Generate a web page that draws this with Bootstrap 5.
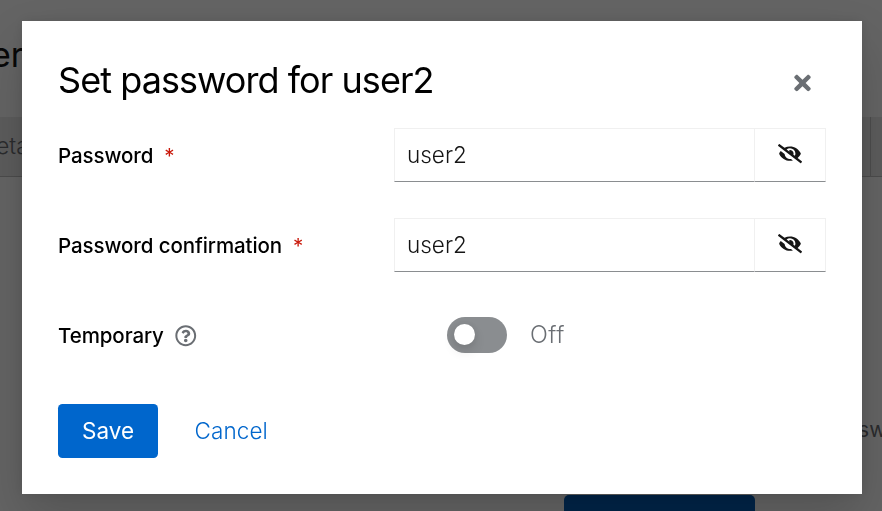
<!DOCTYPE html>
<html lang="en">
<head>
<meta charset="utf-8">
<meta name="viewport" content="width=device-width, initial-scale=1">
<title>Set password for user2</title>
<link href="https://cdn.jsdelivr.net/npm/bootstrap@5.3.0/dist/css/bootstrap.min.css" rel="stylesheet">
<style>
html, body { height: 100%; }
body { background: #646464; font-family: Inter, "Open Sans", sans-serif; font-size: 22px; font-weight: 300; color: #151515; }
.page { height: 511px; }
.page-title { height: 117px; padding-top: 31px; font-size: 34px; line-height: 48px; font-weight: 400; color: #080808; }
.page-title span { margin-left: -9px; }
.tab-strip { height: 60px; background: #5c5c5c; border-bottom: 1px solid #4c4c4c; font-size: 23px; color: #2a2b2d; }
.tab-strip .tab-name { margin-left: -4px; }
.tab-end { width: 12px; border-left: 1px solid #4c4c4c; }
.hint { padding-top: 234px; height: 318px; font-size: 21px; line-height: 38px; font-weight: 400; color: #2a2b2d; }
.hint span { margin-right: -37px; }
.under-btn { width: 191px; height: 16px; margin-left: 564px; background: #002448; border-radius: 5px 5px 0 0; }
.modal { --bs-modal-width: 840px; --bs-modal-margin: 0; }
.modal-dialog { margin: 21px 20px 0 22px; max-width: 840px; }
.modal-content { height: 473px; border: 0; border-radius: 0; padding: 36px 36px 0; box-shadow: 0 24px 48px rgba(3,3,3,.16), 0 0 12px rgba(3,3,3,.1); color: #151515; }
.head { height: 71px; }
.head h1 { font-size: 36px; line-height: 47px; font-weight: 400; letter-spacing: -.95px; color: #000; }
.close-x { margin: 14px 15.5px 0 0; color: #6a6e73; line-height: 0; }
.field { height: 54px; margin-bottom: 36px; }
.field-label { width: 336px; padding-top: 2px; font-size: 20.5px; font-weight: 500; letter-spacing: -.09px; color: #000; }
.req { color: #c9190b; margin-left: 11px; font-weight: 400; }
.field .input-group { width: 432px; height: 54px; }
.field .form-control { border: 1px solid #f0f0f0; border-bottom-color: #8a8d90; border-radius: 0; padding: 0 12px; font-size: 22.5px; font-weight: 300; color: #151515; }
.field .btn { width: 72px; border: 1px solid #f0f0f0; border-bottom-color: #8a8d90; border-radius: 0; padding: 0 0 2px; line-height: 0; color: #151515; }
.help { margin-left: 11.5px; line-height: 0; color: #6a6e73; }
.toggle { width: 60px; height: 36px; margin-left: 53px; padding-left: 7px; border-radius: 18px; background: #8a8d90; }
.knob { width: 21px; height: 21px; margin-bottom: 1px; border-radius: 50%; background: #fff; box-shadow: 0 6px 12px rgba(3,3,3,.12), 0 0 6px rgba(3,3,3,.06); }
.off { margin-left: 23px; font-size: 23.5px; letter-spacing: .5px; color: #6a6e73; }
.actions { margin-top: 6px; }
.actions .btn { height: 54px; padding: 0; font-size: 22.5px; }
.save { width: 100px; background: #06c; border: 0; border-radius: 4.5px; color: #fff; font-weight: 400; }
.cancel { margin-left: 36.5px; border: 0; color: #06c; font-weight: 300; letter-spacing: .1px; }
</style>
</head>
<body class="overflow-hidden">
<div class="page overflow-hidden">
  <div class="page-title"><span>er</span></div>
  <div class="tab-strip d-flex justify-content-between">
    <span class="tab-name align-self-center">eta</span>
    <div class="tab-end"></div>
  </div>
  <div class="hint text-end"><span>sword</span></div>
  <div class="under-btn"></div>
</div>

<div class="modal d-block overflow-hidden" tabindex="-1" role="dialog" aria-modal="true">
  <div class="modal-dialog">
    <div class="modal-content">
      <div class="head d-flex justify-content-between align-items-start">
        <h1 class="m-0">Set password for user2</h1>
        <button type="button" class="close-x btn p-0 border-0" aria-label="Close">
          <svg width="17" height="24" viewBox="0 0 352 512" fill="currentColor"><path d="M242.72 256l100.07-100.07c12.28-12.28 12.28-32.19 0-44.48l-22.24-22.24c-12.28-12.28-32.19-12.28-44.48 0L176 189.28 75.93 89.21c-12.28-12.28-32.19-12.28-44.48 0L9.21 111.45c-12.28 12.28-12.28 32.19 0 44.48L109.28 256 9.21 356.07c-12.28 12.28-12.28 32.19 0 44.48l22.24 22.24c12.28 12.28 32.2 12.28 44.48 0L176 322.72l100.07 100.07c12.28 12.28 32.2 12.28 44.48 0l22.24-22.24c12.28-12.28 12.28-32.19 0-44.48L242.72 256z"/></svg>
        </button>
      </div>

      <div class="field d-flex align-items-center">
        <label class="field-label" for="pw">Password<span class="req">*</span></label>
        <div class="input-group">
          <input id="pw" class="form-control" type="text" value="user2">
          <button type="button" class="btn" aria-label="Hide password">
            <svg width="24" height="19.2" viewBox="0 0 640 512" fill="currentColor"><path d="M320 400c-75.85 0-137.25-58.71-142.9-133.11L72.2 185.82c-13.79 17.3-26.48 35.59-36.72 55.59a32.35 32.35 0 0 0 0 29.19C89.71 376.41 197.07 448 320 448c26.91 0 52.87-4 77.89-10.46L346 397.39a144.13 144.13 0 0 1-26 2.61zm313.82 58.1l-110.55-85.44a331.25 331.25 0 0 0 81.25-102.07 32.35 32.35 0 0 0 0-29.19C550.29 135.59 442.93 64 320 64a308.15 308.15 0 0 0-147.32 37.7L45.46 3.37A16 16 0 0 0 23 6.18L3.37 31.45A16 16 0 0 0 6.18 53.9l588.36 454.73a16 16 0 0 0 22.46-2.81l19.64-25.27a16 16 0 0 0-2.82-22.45zm-183.72-142l-39.3-30.38A94.75 94.75 0 0 0 416 256a94.76 94.76 0 0 0-121.31-92.21A47.65 47.65 0 0 1 304 192a46.64 46.64 0 0 1-1.54 10l-73.61-56.89A142.31 142.31 0 0 1 320 112a143.92 143.92 0 0 1 144 144c0 21.63-5.29 41.79-13.9 60.11z"/></svg>
          </button>
        </div>
      </div>

      <div class="field d-flex align-items-center">
        <label class="field-label" for="pw2">Password confirmation<span class="req">*</span></label>
        <div class="input-group">
          <input id="pw2" class="form-control" type="text" value="user2">
          <button type="button" class="btn" aria-label="Hide password">
            <svg width="24" height="19.2" viewBox="0 0 640 512" fill="currentColor"><path d="M320 400c-75.85 0-137.25-58.71-142.9-133.11L72.2 185.82c-13.79 17.3-26.48 35.59-36.72 55.59a32.35 32.35 0 0 0 0 29.19C89.71 376.41 197.07 448 320 448c26.91 0 52.87-4 77.89-10.46L346 397.39a144.13 144.13 0 0 1-26 2.61zm313.82 58.1l-110.55-85.44a331.25 331.25 0 0 0 81.25-102.07 32.35 32.35 0 0 0 0-29.19C550.29 135.59 442.93 64 320 64a308.15 308.15 0 0 0-147.32 37.7L45.46 3.37A16 16 0 0 0 23 6.18L3.37 31.45A16 16 0 0 0 6.18 53.9l588.36 454.73a16 16 0 0 0 22.46-2.81l19.64-25.27a16 16 0 0 0-2.82-22.45zm-183.72-142l-39.3-30.38A94.75 94.75 0 0 0 416 256a94.76 94.76 0 0 0-121.31-92.21A47.65 47.65 0 0 1 304 192a46.64 46.64 0 0 1-1.54 10l-73.61-56.89A142.31 142.31 0 0 1 320 112a143.92 143.92 0 0 1 144 144c0 21.63-5.29 41.79-13.9 60.11z"/></svg>
          </button>
        </div>
      </div>

      <div class="field d-flex align-items-center">
        <div class="field-label d-flex align-items-center">
          <span>Temporary</span>
          <span class="help"><svg width="21.5" height="21.5" viewBox="0 0 512 512" fill="currentColor"><path d="M256 8C119.043 8 8 119.083 8 256c0 136.997 111.043 248 248 248s248-111.003 248-248C504 119.083 392.957 8 256 8zm0 448c-110.532 0-200-89.431-200-200 0-110.495 89.472-200 200-200 110.491 0 200 89.471 200 200 0 110.53-89.431 200-200 200zm107.244-255.2c0 67.052-72.421 68.084-72.421 92.863V300c0 6.627-5.373 12-12 12h-45.647c-6.627 0-12-5.373-12-12v-8.659c0-35.745 27.1-50.034 47.579-61.516 17.561-9.845 28.324-16.541 28.324-29.579 0-17.246-21.999-28.693-39.784-28.693-23.189 0-33.894 10.977-48.942 29.969-4.057 5.12-11.46 6.071-16.666 2.124l-27.824-21.098c-5.107-3.872-6.251-11.066-2.644-16.363C184.846 131.491 214.94 112 261.794 112c49.071 0 101.45 38.304 101.45 88.8zM298 368c0 23.159-18.841 42-42 42s-42-18.841-42-42 18.841-42 42-42 42 18.841 42 42z"/></svg></span>
        </div>
        <div class="toggle d-flex align-items-center" role="switch" aria-checked="false"><div class="knob"></div></div>
        <span class="off">Off</span>
      </div>

      <div class="actions d-flex">
        <button type="button" class="btn save">Save</button>
        <button type="button" class="btn cancel">Cancel</button>
      </div>
    </div>
  </div>
</div>
<script src="https://cdn.jsdelivr.net/npm/bootstrap@5.3.0/dist/js/bootstrap.bundle.min.js"></script>
</body>
</html>
